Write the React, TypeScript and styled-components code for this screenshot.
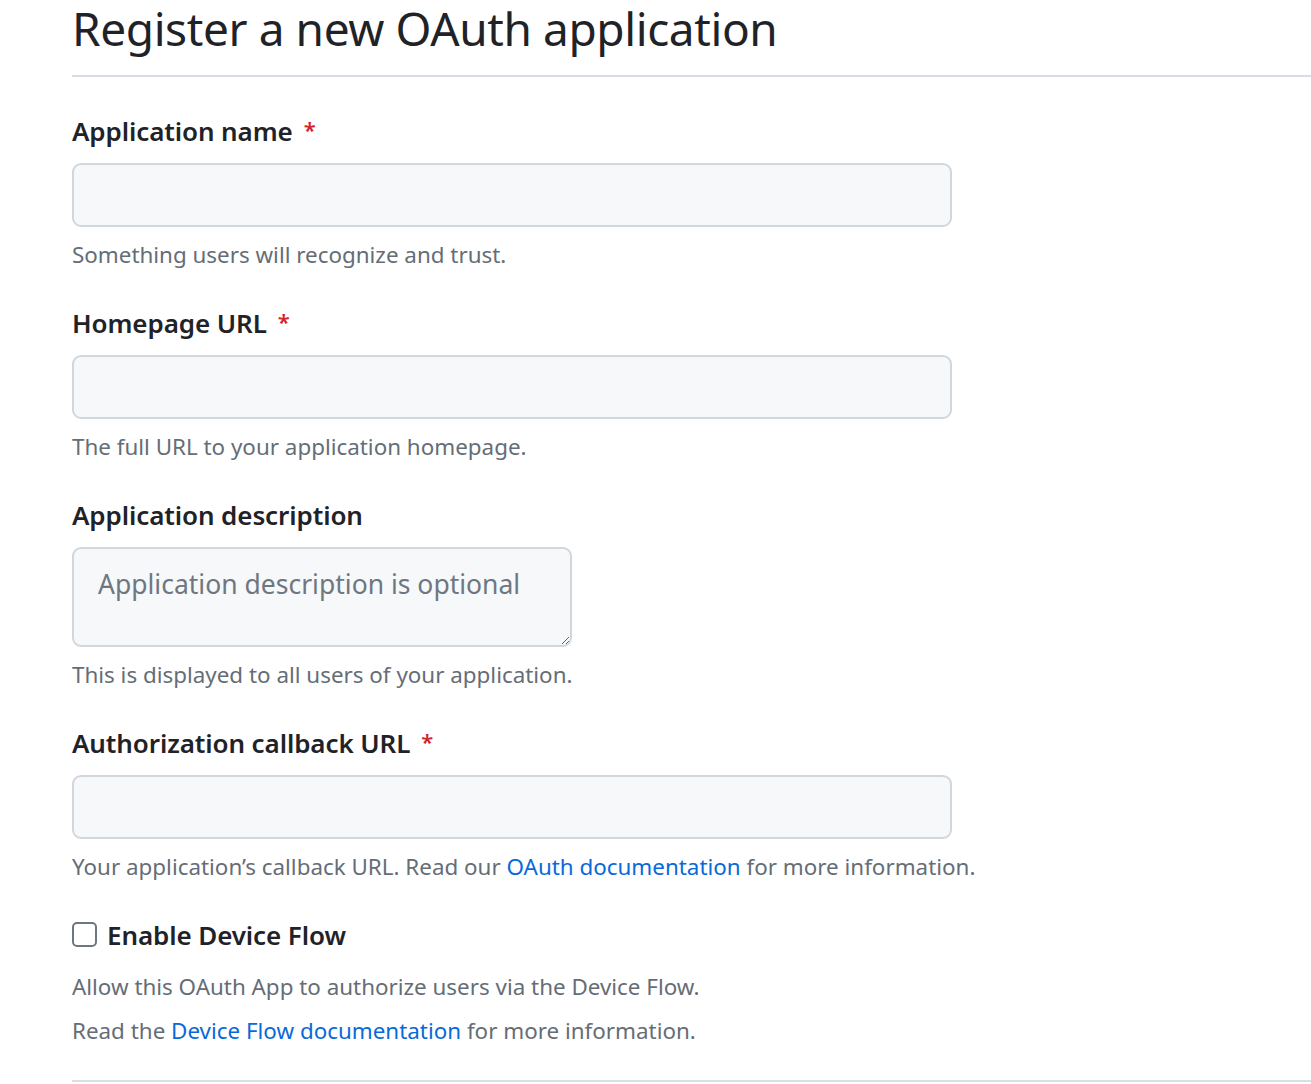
import React from "react";
import styled, { createGlobalStyle } from "styled-components";

const GlobalStyle = createGlobalStyle`
  html, body {
    margin: 0;
    padding: 0;
    background: #ffffff;
  }
  body {
    font-family: "Noto Sans", "Open Sans", sans-serif;
    color: #1f2328;
  }
`;

const Page = styled.div`
  padding-left: 72px;
  overflow: hidden;
`;

const Title = styled.h1`
  margin: 0;
  font-size: 46px;
  font-weight: 400;
  line-height: 56px;
  padding-bottom: 19px;
  border-bottom: 2px solid #d8dee4;
  letter-spacing: -0.4px;
`;

const Form = styled.form`
  padding-top: 39px;
`;

const Group = styled.div`
  margin-bottom: 38px;
`;

const Label = styled.label`
  display: flex;
  align-items: center;
  height: 30px;
  font-size: 26px;
  font-weight: 600;
  margin-bottom: 17px;
  letter-spacing: -0.1px;
`;

const Required = styled.span`
  color: #d1242f;
  margin-left: 11px;
  font-size: 22px;
  align-self: flex-start;
  line-height: 26px;
`;

const TextInput = styled.input`
  display: block;
  box-sizing: border-box;
  width: 880px;
  height: 64px;
  border: 2px solid #d0d7de;
  border-radius: 9px;
  background: #f6f8fa;
  padding: 0 18px;
  font: inherit;
  font-size: 22px;
  outline: none;
`;

const TextArea = styled.textarea`
  display: block;
  box-sizing: border-box;
  width: 500px;
  height: 100px;
  border: 2px solid #d0d7de;
  border-radius: 9px;
  background: #f6f8fa;
  padding: 18px 24px;
  font-family: inherit;
  font-size: 26.5px;
  line-height: 34px;
  color: #1f2328;
  outline: none;
  &::placeholder {
    color: #6e7781;
  }
`;

const Note = styled.p<{ $gap?: number }>`
  margin: ${(p) => p.$gap ?? 13}px 0 0;
  height: 30px;
  font-size: 22.4px;
  line-height: 30px;
  color: #656d76;
`;

const Link = styled.a`
  color: #0969da;
  text-decoration: none;
`;

const CheckRow = styled.label`
  display: flex;
  align-items: center;
  gap: 10px;
  height: 30px;
  font-size: 26px;
  font-weight: 600;
  letter-spacing: -0.1px;
`;

const Box = styled.input`
  appearance: none;
  margin: 0 0 2px;
  width: 25px;
  height: 25px;
  border: 2px solid #6e7781;
  border-radius: 5px;
  background: #ffffff;
`;

const Divider = styled.hr`
  margin: 34px 0 0;
  border: 0;
  border-top: 2px solid #d8dee4;
`;

export default function App() {
  return (
    <Page>
      <GlobalStyle />
      <Title>Register a new OAuth application</Title>
      <Form>
        <Group>
          <Label>
            Application name<Required>*</Required>
          </Label>
          <TextInput type="text" />
          <Note>Something users will recognize and trust.</Note>
        </Group>
        <Group>
          <Label>
            Homepage URL<Required>*</Required>
          </Label>
          <TextInput type="text" />
          <Note>The full URL to your application homepage.</Note>
        </Group>
        <Group>
          <Label>Application description</Label>
          <TextArea placeholder="Application description is optional" />
          <Note>This is displayed to all users of your application.</Note>
        </Group>
        <Group>
          <Label>
            Authorization callback URL<Required>*</Required>
          </Label>
          <TextInput type="text" />
          <Note>
            Your application’s callback URL. Read our{" "}
            <Link href="#">OAuth documentation</Link> for more information.
          </Note>
        </Group>
        <CheckRow>
          <Box type="checkbox" />
          Enable Device Flow
        </CheckRow>
        <Note $gap={22}>Allow this OAuth App to authorize users via the Device Flow.</Note>
        <Note $gap={14}>
          Read the <Link href="#">Device Flow documentation</Link> for more
          information.
        </Note>
        <Divider />
      </Form>
    </Page>
  );
}
